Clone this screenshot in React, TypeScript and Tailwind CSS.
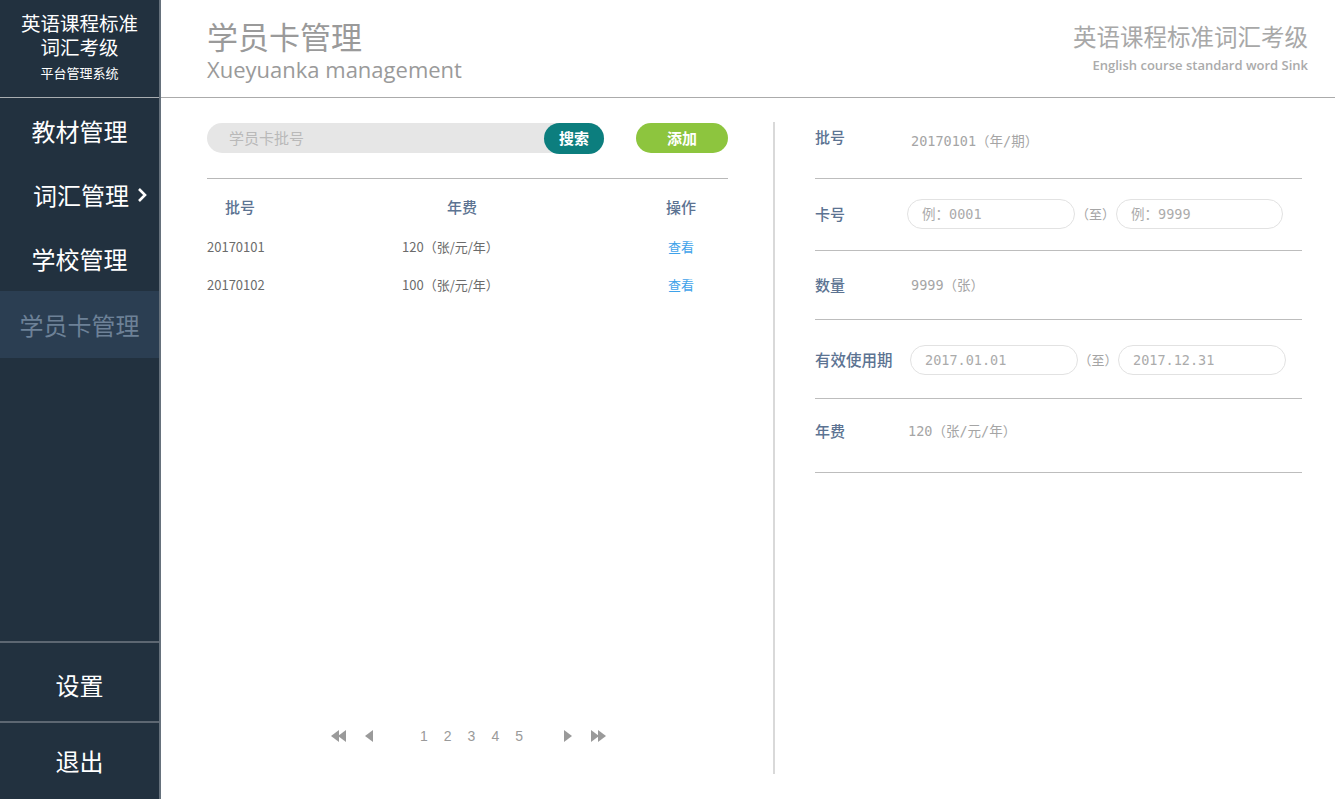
import React from "react";

const cjk = { fontFamily: '"Noto Sans CJK SC", "Noto Sans", sans-serif' };
const tight = { fontFamily: '"Liberation Sans", "Noto Sans CJK SC", sans-serif' };
const latin = { fontFamily: '"Open Sans", "Noto Sans CJK SC", sans-serif' };
const mono = { fontFamily: '"DejaVu Sans Mono", "Noto Sans CJK SC", monospace' };

function Tri({ dir, double }: { dir: "l" | "r"; double?: boolean }) {
  const one = dir === "l" ? "M9 1 L9 13 L1 7 Z" : "M1 1 L1 13 L9 7 Z";
  const two = dir === "l" ? "M16 1 L16 13 L8 7 Z" : "M8 1 L8 13 L16 7 Z";
  return (
    <svg width={double ? 17 : 10} height="14" viewBox={double ? "0 0 17 14" : "0 0 10 14"} fill="#9a9a9a">
      <path d={one} />
      {double && <path d={two} />}
    </svg>
  );
}

function Field({ ph, w = "w-[168px]" }: { ph: string; w?: string }) {
  return (
    <div
      className={`h-[30px] ${w} rounded-full border border-[#e2e2e2] pl-[14px] flex items-center text-[13.5px] text-[#ababab]`}
      style={mono}
    >
      {ph}
    </div>
  );
}

export default function App() {
  const menu = ["教材管理", "词汇管理", "学校管理"];
  const rows = [
    ["20170101", "120（张/元/年）"],
    ["20170102", "100（张/元/年）"],
  ];
  return (
    <div className="flex w-[1335px] h-[799px] bg-white overflow-hidden" style={cjk}>
      {/* sidebar */}
      <div className="w-[161px] shrink-0 bg-[#22313f] border-r-2 border-[#66717c] flex flex-col text-white">
        <div className="h-[98px] border-b border-[#a9adb1] flex flex-col items-center pt-[12px]" style={tight}>
          <div className="text-[19.5px] leading-[24px]">英语课程标准</div>
          <div className="text-[19.5px] leading-[24px]">词汇考级</div>
          <div className="text-[13px] leading-[18px] mt-[5px]">平台管理系统</div>
        </div>
        <div className="pt-[1px] flex flex-col">
          {menu.map((m, i) => (
            <div key={m} className={`h-[64px] flex items-center text-[24px] ${i === 1 ? "pl-[33px] gap-[8px]" : "justify-center"}`}>
              <span>{m}</span>
              {i === 1 && (
                <svg width="10" height="16" viewBox="0 0 10 16" fill="none" stroke="white" strokeWidth="2.6">
                  <path d="M2 2 L8 8 L2 14" />
                </svg>
              )}
            </div>
          ))}
          <div className="h-[67px] bg-[#2b3e52] flex items-center justify-center text-[24px] text-[#6d8197]">学员卡管理</div>
        </div>
        <div className="mt-auto border-t-2 border-[#5d6772] h-[80px] flex items-center justify-center pt-[6px] text-[24px]">设置</div>
        <div className="border-t-2 border-[#5d6772] h-[78px] flex items-center justify-center text-[24px]">退出</div>
      </div>

      {/* main */}
      <div className="flex-1 flex flex-col">
        <div className="h-[98px] border-b border-[#ababab] flex justify-between pl-[46px] pr-[27px]">
          <div className="flex flex-col pt-[19px]">
            <div className="text-[31px] leading-[34px] text-[#9a9a9a]">学员卡管理</div>
            <div className="text-[22px] leading-[28px] text-[#9a9a9a] mt-[2px]" style={latin}>Xueyuanka management</div>
          </div>
          <div className="flex flex-col items-end pt-[22px]">
            <div className="text-[23.5px] leading-[28px] text-[#a8a8a8]">英语课程标准词汇考级</div>
            <div className="text-[13px] leading-[18px] text-[#ababab] mt-[6px] font-semibold" style={latin}>
              English course standard word Sink
            </div>
          </div>
        </div>

        <div className="flex-1 flex pt-[24px] pb-[25px]">
          {/* left panel */}
          <div className="ml-[46px] w-[521px] flex flex-col pt-[1px]">
            <div className="flex items-center">
              <div className="w-[397px] h-[30px] rounded-full bg-[#e6e6e6] flex items-center justify-between">
                <span className="pl-[22px] text-[15px] text-[#b9b9b9]">学员卡批号</span>
                <button className="h-[31px] w-[60px] rounded-full bg-[#0c7e7e] text-white text-[15px] font-bold">搜索</button>
              </div>
              <button className="ml-[32px] h-[30px] w-[92px] rounded-full bg-[#8dc53e] text-white text-[15px] font-bold">添加</button>
            </div>
            <div className="mt-[25px] border-t border-[#b8b8b8]" />
            <div className="h-[49px] flex items-center pt-[8px] text-[15px] text-[#5c7392] font-medium">
              <div className="w-[195px] pl-[18px]">批号</div>
              <div className="w-[234px] pl-[45px]">年费</div>
              <div className="w-[90px] text-center">操作</div>
            </div>
            {rows.map((r) => (
              <div key={r[0]} className="h-[38px] flex items-center text-[13px] text-[#6b6b6b]">
                <div className="w-[195px]">{r[0]}</div>
                <div className="w-[234px]">{r[1]}</div>
                <div className="w-[90px] text-center text-[#3ea2ea]">查看</div>
              </div>
            ))}
            <div className="mt-auto mb-[28px] h-[20px] flex items-center text-[14px] text-[#9a9a9a]" style={{ fontFamily: '"Liberation Sans", Arial, sans-serif' }}>
              <div className="ml-[123px]"><Tri dir="l" double /></div>
              <div className="ml-[17px]"><Tri dir="l" /></div>
              <div className="ml-[46px] flex gap-[16px]">
                <span>1</span><span>2</span><span>3</span><span>4</span><span>5</span>
              </div>
              <div className="ml-[40px]"><Tri dir="r" /></div>
              <div className="ml-[17px]"><Tri dir="r" double /></div>
            </div>
          </div>

          <div className="ml-[45px] w-[2px] bg-[#d9d9d9]" />

          {/* right panel */}
          <div className="ml-[40px] w-[487px] flex flex-col">
            <div className="h-[57px] border-b border-[#bdbdbd] flex items-start">
              <div className="w-[96px] h-[30px] flex items-center text-[15px] text-[#5c7392] font-medium">批号</div>
              <div className="h-[30px] pt-[8px] flex items-center text-[13.5px] text-[#a5a5a5]" style={mono}>20170101（年/期）</div>
            </div>
            <div className="h-[72px] border-b border-[#bdbdbd] flex items-start pt-[20px]">
              <div className="w-[92px] h-[30px] flex items-center text-[15px] text-[#5c7392] font-medium">卡号</div>
              <Field ph="例：0001" />
              <span className="w-[41px] text-center text-[13px] text-[#a5a5a5] leading-[30px]">（至）</span>
              <Field ph="例：9999" w="w-[167px]" />
            </div>
            <div className="h-[69px] border-b border-[#bdbdbd] flex items-start pt-[19px]">
              <div className="w-[96px] h-[30px] flex items-center text-[15px] text-[#5c7392] font-medium">数量</div>
              <div className="h-[30px] flex items-center text-[13.5px] text-[#a5a5a5]" style={mono}>9999（张）</div>
            </div>
            <div className="h-[79px] border-b border-[#bdbdbd] flex items-start pt-[25px]">
              <div className="w-[95px] h-[30px] flex items-center text-[15.5px] text-[#5c7392] font-medium">有效使用期</div>
              <Field ph="2017.01.01" />
              <span className="w-[40px] text-center text-[13px] text-[#a5a5a5] leading-[30px]">（至）</span>
              <Field ph="2017.12.31" />
            </div>
            <div className="h-[74px] border-b border-[#bdbdbd] flex items-start pt-[17px]">
              <div className="w-[93px] h-[30px] flex items-center text-[15px] text-[#5c7392] font-medium">年费</div>
              <div className="h-[30px] flex items-center text-[13.5px] text-[#a5a5a5]" style={mono}>120（张/元/年）</div>
            </div>
          </div>
        </div>
      </div>
    </div>
  );
}
